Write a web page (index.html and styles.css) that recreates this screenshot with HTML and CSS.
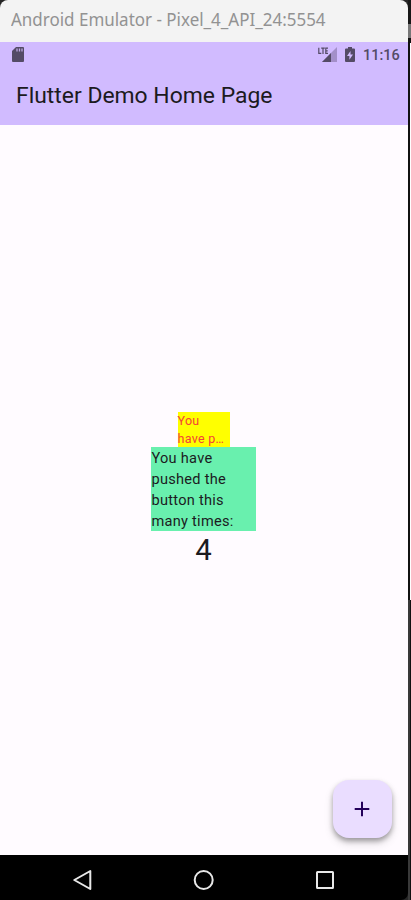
FILE: index.html
```html
<!DOCTYPE html>
<html lang="en">
<head>
<meta charset="utf-8">
<title>Android Emulator</title>
<link rel="stylesheet" href="styles.css">
</head>
<body>
<div class="desktop">
  <main class="emulator">
    <div class="titlebar"><span class="window-title">Android Emulator - Pixel_4_API_24:5554</span></div>
    <header class="appbar">
      <div class="status">
        <svg class="sd" width="12" height="15" viewBox="0 0 12 15"><path fill="#544b66" d="M4 0h7q1 0 1 1v13q0 1-1 1H1q-1 0-1-1V4z"/><path stroke="#bda9e2" stroke-width="1.3" d="M5 1.500v3M7.500 1.500v3M10 1.500v3"/></svg>
        <div class="indicators">
          <svg class="signal" width="19" height="15" viewBox="0 0 19 15"><path fill="#a38fc9" d="M19 0v15H4z"/><path fill="#544b66" d="M13 6v9H4z"/><path fill="#d1bbff" d="M0 0h10.500v7H0z"/><path fill="none" stroke="#544b66" stroke-width="1.200" d="M.8.7v5.600h2.500M3.200 1.200h3.600M5 1v6M10 1.200H7.800v5.100H10M7.800 3.800h1.900"/></svg>
          <svg class="battery" width="10" height="15" viewBox="0 0 10 15"><path fill="#544b66" d="M3 0h4v1.500h2q1 0 1 1V14q0 1-1 1H1q-1 0-1-1V2.500q0-1 1-1h2z"/><path fill="#d1bbff" d="M5.500 4 2 9h2.400v3.800L8 7.600H5.500z"/></svg>
          <span class="clock">11:16</span>
        </div>
      </div>
      <h1 class="title">Flutter Demo Home Page</h1>
    </header>
    <section class="content">
      <div class="small-box">You<br>have p…</div>
      <div class="large-box">You have pushed the button this many times:</div>
      <div class="count">4</div>
      <button class="fab" aria-label="Increment"><svg width="16" height="16" viewBox="0 0 16 16"><path stroke="#24005a" stroke-width="2" d="M8 .7v14.600M.7 8h14.600"/></svg></button>
    </section>
    <nav class="navbar">
      <svg width="20" height="22" viewBox="0 0 20 22"><path d="M17.300 2v18L1.300 11z"/></svg>
      <svg width="22" height="22" viewBox="0 0 22 22"><circle cx="10.700" cy="11" r="9"/></svg>
      <svg width="20" height="22" viewBox="0 0 20 22"><rect x="2" y="3" width="16" height="16" rx=".5"/></svg>
    </nav>
  </main>
  <aside class="edge"><div class="edge-top"></div><div class="edge-button"></div><div class="edge-gap"></div><div class="edge-light"></div><div class="edge-bottom"></div></aside>
</div>
</body>
</html>
```

FILE: styles.css
```css
* { box-sizing: border-box; }
body { margin: 0; font-family: Roboto, sans-serif; }
.desktop { display: flex; width: 411px; height: 900px; background: #252525; overflow: hidden; }
.emulator { width: 408px; height: 900px; display: flex; flex-direction: column; border-radius: 8px 8px 7px 0; overflow: hidden; }
.titlebar { height: 42px; background: #f3f3f3; padding-left: 11px; }
.window-title { display: inline-block; font: 18px/39px "Noto Sans", sans-serif; color: #929292; white-space: nowrap; transform-origin: left; transform: scaleX(.943); }
.appbar { height: 83px; background: #d1bbff; }
.status { height: 25px; display: flex; justify-content: space-between; padding: 5px 8px 0 12px; }
.status svg { display: block; flex: none; }
.indicators { display: flex; align-items: flex-start; }
.battery { margin-left: 8px; }
.clock { margin-left: 8px; width: 37px; font-size: 14.500px; line-height: 17px; font-weight: 500; color: #544b66; white-space: nowrap; }
.title { margin: 0; padding: 14px 0 0 16px; font-size: 22.900px; line-height: 29px; font-weight: 400; color: #1c1a20; white-space: nowrap; }
.content { position: relative; height: 730px; background: #fffbff; display: flex; flex-direction: column; align-items: center; padding-top: 287px; }
.small-box { width: 52px; height: 35px; margin-right: 1px; background: #ffff00; color: #f44336; font-size: 12.500px; line-height: 18px; letter-spacing: .3px; white-space: nowrap; }
.large-box { width: 105px; height: 84px; margin-right: 1px; background: #69f0ae; color: #1c1b1f; font-size: 14.600px; line-height: 21px; letter-spacing: .25px; padding: 1px 0 0 .5px; }
.count { margin-right: 1px; font-size: 29.300px; line-height: 38px; color: #1c1b1f; }
.fab { position: absolute; right: 16px; bottom: 17px; width: 59px; height: 58px; padding: 0 1px 0 0; border: 0; border-radius: 16px; background: #eaddff; display: flex; align-items: center; justify-content: center; box-shadow: 0 3px 5px #0000004d, 0 5px 10px #00000024; }
.navbar { height: 45px; background: #000; display: flex; justify-content: space-between; padding: 14px 73px 0; }
.navbar svg { fill: none; stroke: #e8e8e8; stroke-width: 2; stroke-linejoin: round; }
.edge { width: 3px; height: 900px; background: #1c1c1c; }
.edge-top { height: 24px; background: #161616; }
.edge-button { height: 14px; background: #777; }
.edge-gap { height: 5px; background: #111; }
.edge-light { height: 557px; background: #fff; border-left: 2px solid #111; }
.edge-bottom { height: 300px; background: #393939; border-right: 1px solid #111; }
```
